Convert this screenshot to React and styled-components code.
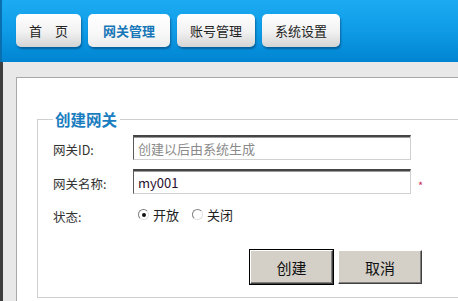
import React from "react";
import styled, { createGlobalStyle } from "styled-components";

const Global = createGlobalStyle`
  html, body {
    margin: 0;
    padding: 0;
    overflow: hidden;
    background: #ffffff;
  }
  body {
    font-family: "Noto Sans CJK SC", "Liberation Sans", sans-serif;
    color: #222;
  }
`;

const Page = styled.div`
  display: flex;
  flex-direction: column;
  width: 458px;
  height: 301px;
  overflow: hidden;
`;

const Header = styled.div`
  display: flex;
  align-items: flex-start;
  gap: 7px;
  height: 62px;
  box-sizing: border-box;
  padding: 14px 0 0 14px;
  border-left: 2px solid #0a6fae;
  background: linear-gradient(to bottom, #1cabf3 0%, #0f9be6 50%, #0084d2 100%);
`;

const Tab = styled.div`
  height: 33px;
  box-sizing: border-box;
  padding: 0 ${p => (p.$active ? 15 : 13)}px;
  display: flex;
  align-items: center;
  border-radius: 5px;
  font-size: 13px;
  font-weight: ${p => (p.$active ? 700 : 400)};
  color: ${p => (p.$active ? "#1677b8" : "#222")};
  background: ${p =>
    p.$active
      ? "linear-gradient(to bottom, #ffffff 0%, #f8f8f8 60%, #e8eaec 100%)"
      : "linear-gradient(to bottom, #ffffff 0%, #f1f1f1 55%, #d4d4d4 100%)"};
  box-shadow: 1px 2px 2px rgba(0, 40, 80, 0.45);
  white-space: pre;
  cursor: pointer;
`;

const Body = styled.div`
  flex: 1;
  display: flex;
  background: #e8e8e8;
  border-left: 3px solid #3e3e3e;
  padding: 15px 0 0 13px;
`;

const Panel = styled.div`
  flex: 1;
  background: #ffffff;
  border-top: 1px solid #a8a8a8;
  border-left: 1px solid #a8a8a8;
  padding: 31px 0 0 20px;
`;

const Fieldset = styled.fieldset`
  width: 520px;
  margin: 0;
  padding: 6px 0 13px 15px;
  border: 1px solid #cfcfcf;
  border-right: none;
  min-inline-size: auto;
`;

const Legend = styled.legend`
  margin-left: 0;
  padding: 0 3px 0 2px;
  font-size: 15.5px;
  line-height: 20px;
  font-weight: 700;
  color: #1a7dbf;
`;

const Form = styled.div`
  display: grid;
  grid-template-columns: 80px 278px auto;
  row-gap: 9px;
  align-items: center;
`;

const Label = styled.div`
  font-size: 12.5px;
  color: #333;
  padding-top: 4px;
`;

const Input = styled.input`
  width: 278px;
  height: 25px;
  box-sizing: border-box;
  margin: 0;
  padding: 0 4px 0 4px;
  font-family: inherit;
  font-size: 13px;
  color: #2a1030;
  border-style: solid;
  border-width: 2px 1px 1px 1px;
  border-color: #454545 #d0d0d0 #d0d0d0 #5a5a5a;
  box-shadow: inset 0 1px 0 #9a9a9a;
  outline: none;
  &::placeholder {
    color: #8a8a8a;
  }
`;

const Required = styled.span`
  color: #d0305a;
  font-size: 11px;
  margin-left: 7px;
  padding-top: 6px;
`;

const Radios = styled.div`
  display: flex;
  align-items: center;
  height: 20px;
  padding-left: 5px;
  gap: 13px;
`;

const RadioItem = styled.label`
  display: flex;
  align-items: center;
  gap: 4px;
  font-size: 13px;
  color: #222;
`;

const RadioDot = styled.span`
  width: 11px;
  height: 11px;
  box-sizing: border-box;
  border-radius: 50%;
  border: 1px solid;
  border-color: #808080 #e0e0e0 #e0e0e0 #808080;
  background: #fff;
  display: flex;
  align-items: center;
  justify-content: center;
  &::after {
    content: "";
    width: 4px;
    height: 4px;
    border-radius: 50%;
    background: ${p => (p.$checked ? "#111" : "transparent")};
  }
`;

const Actions = styled.div`
  display: flex;
  gap: 5px;
  margin-top: 24px;
  padding-left: 196px;
`;

const Button = styled.button`
  width: ${p => p.$w}px;
  height: 34px;
  box-sizing: border-box;
  margin: 0;
  font-family: inherit;
  font-size: 15px;
  color: #111;
  background: #d4d0c8;
  border: 1px solid;
  border-color: #ffffff #404040 #404040 #ffffff;
  box-shadow: ${p =>
    p.$default
      ? "0 0 0 1px #000, inset -1px -1px 0 #808080"
      : "inset -1px -1px 0 #808080"};
  ${p => (p.$default ? "margin-left: 1px;" : "")}
  cursor: pointer;
`;

export default function App() {
  return (
    <>
      <Global />
      <Page>
        <Header>
          <Tab>首　页</Tab>
          <Tab $active>网关管理</Tab>
          <Tab>账号管理</Tab>
          <Tab>系统设置</Tab>
        </Header>
        <Body>
          <Panel>
            <Fieldset>
              <Legend>创建网关</Legend>
              <Form>
                <Label>网关ID:</Label>
                <Input placeholder="创建以后由系统生成" readOnly />
                <span />
                <Label>网关名称:</Label>
                <Input defaultValue="my001" />
                <Required>*</Required>
                <Label>状态:</Label>
                <Radios>
                  <RadioItem>
                    <RadioDot $checked />
                    开放
                  </RadioItem>
                  <RadioItem>
                    <RadioDot />
                    关闭
                  </RadioItem>
                </Radios>
                <span />
              </Form>
              <Actions>
                <Button $w={83} $default>创建</Button>
                <Button $w={84}>取消</Button>
              </Actions>
            </Fieldset>
          </Panel>
        </Body>
      </Page>
    </>
  );
}
